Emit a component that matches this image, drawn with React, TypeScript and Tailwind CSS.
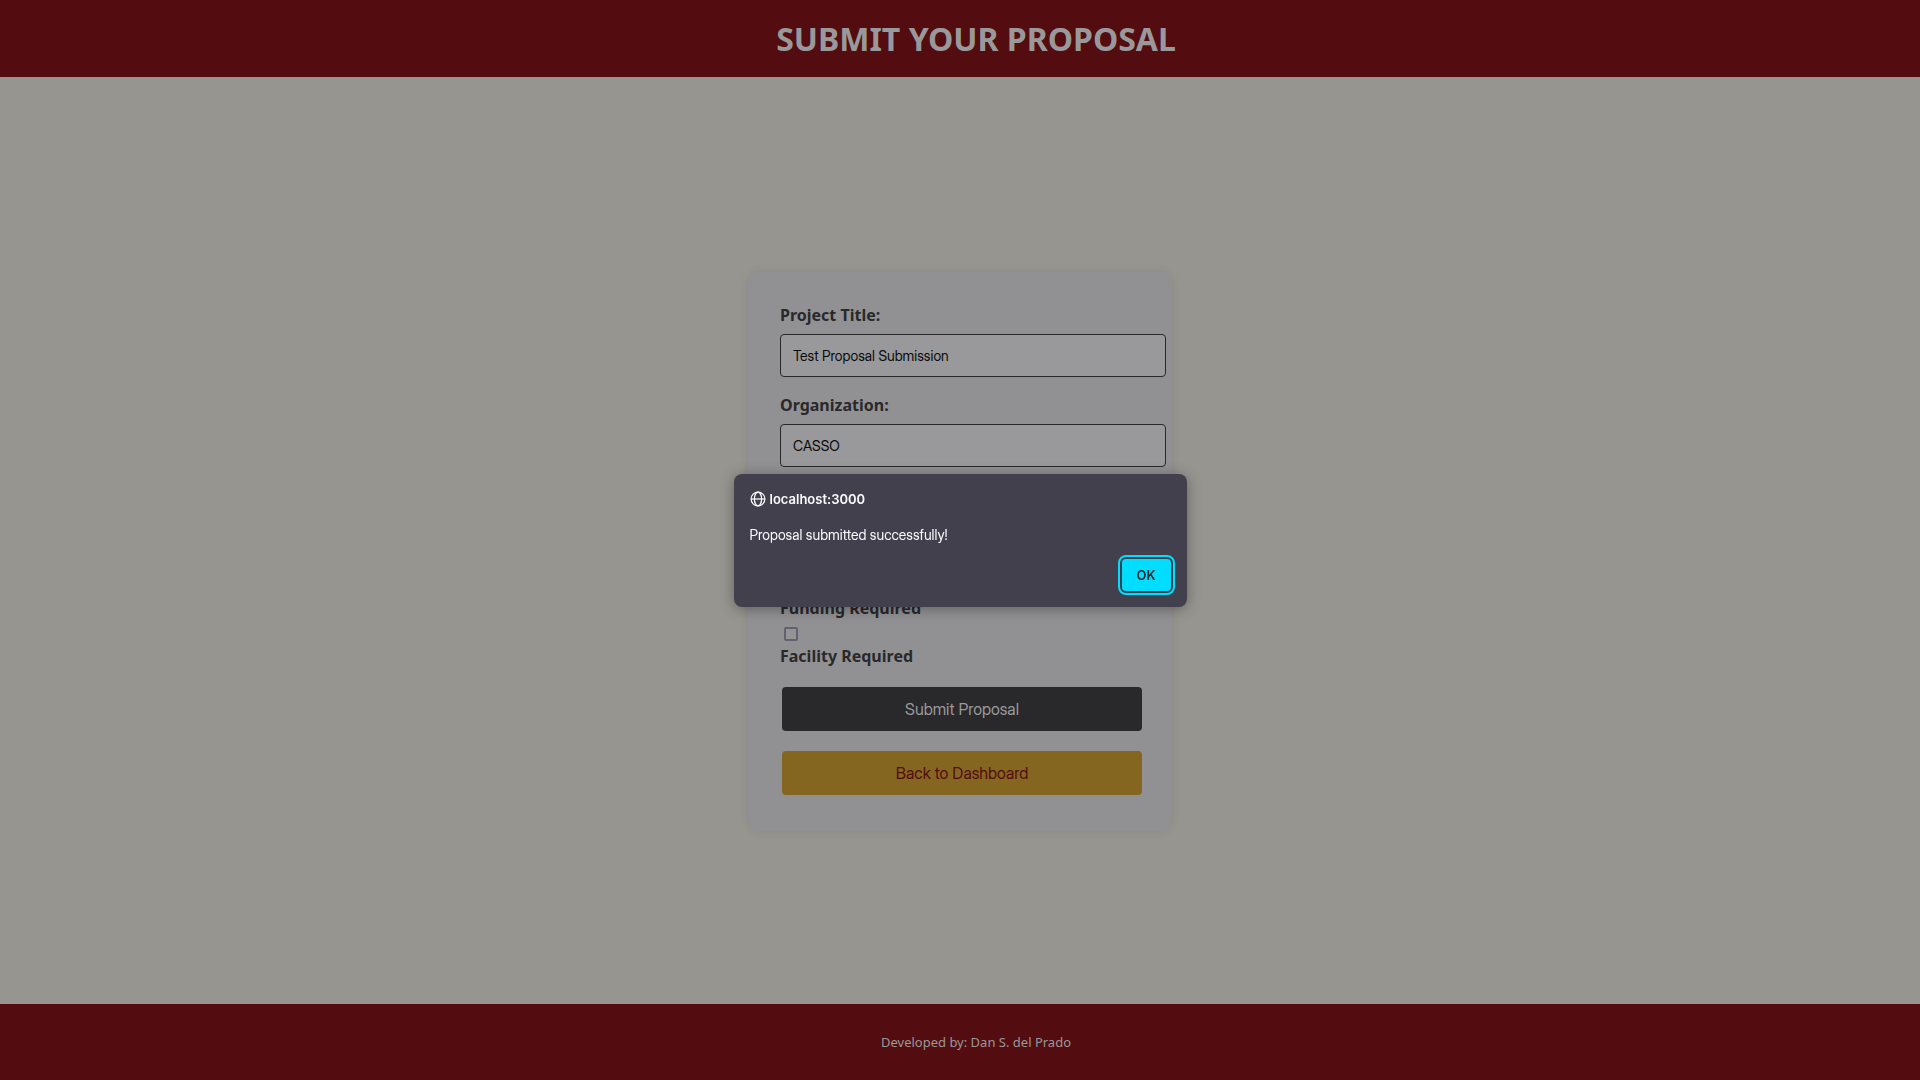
type FieldProps = { id: string; label: string; value: string };

function Field({ id, label, value }: FieldProps) {
  return (
    <div className="mb-[17px]">
      <label htmlFor={id} className="mb-2 block text-base leading-[22px] font-bold">
        {label}
      </label>
      <input
        id={id}
        type="text"
        defaultValue={value}
        className="block h-[43px] w-[386px] rounded border border-[#29292b] bg-[#99999b] px-3 font-['Inter_Display',Inter,sans-serif] text-sm text-[#0b0b0c]"
      />
    </div>
  );
}

function CheckField({ id, label }: { id: string; label: string }) {
  return (
    <div className="flex flex-col gap-1">
      <input
        id={id}
        type="checkbox"
        className="ml-1 size-[14px] appearance-none rounded-xs border-2 border-[#63616f] bg-[#949497]"
      />
      <label htmlFor={id} className="text-base leading-[22px] font-bold">
        {label}
      </label>
    </div>
  );
}

function GlobeIcon() {
  return (
    <svg aria-hidden="true" viewBox="0 0 16 16" className="size-4" fill="none" stroke="currentColor" strokeWidth="1.25">
      <circle cx="8" cy="8" r="6.9" />
      <ellipse cx="8" cy="8" rx="3.6" ry="6.9" />
      <path d="M1 8h14" />
    </svg>
  );
}

export default function App() {
  return (
    <div className="flex min-h-screen flex-col bg-[#979590] font-['Noto_Sans',sans-serif] text-[#29292b]">
      <header className="bg-[#530c10] py-4 pl-8 text-center">
        <h1 className="text-[32px] leading-[45px] font-bold text-[#99999b]">SUBMIT YOUR PROPOSAL</h1>
      </header>

      <main className="flex grow items-center justify-center pt-[22px]">
        <form className="w-[424px] rounded-[10px] bg-[#919193] px-8 pt-8 pb-9 shadow-[0_0_10px_rgba(0,0,0,0.08)]">
          <Field id="title" label="Project Title:" value="Test Proposal Submission" />
          <Field id="organization" label="Organization:" value="CASSO" />
          <div className="flex flex-col gap-2 pt-[95px]">
            <CheckField id="funding" label="Funding Required" />
            <CheckField id="facility" label="Facility Required" />
          </div>
          <div className="mt-5 flex flex-col gap-5 px-[2px] font-['Inter_Display',Inter,sans-serif] text-base">
            <button type="submit" className="h-11 w-[360px] rounded bg-[#29292b] text-[#99999b]">
              Submit Proposal
            </button>
            <button type="button" className="h-11 w-[360px] rounded bg-[#856620] text-[#530c10]">
              Back to Dashboard
            </button>
          </div>
        </form>
      </main>

      <footer className="bg-[#530c10] py-[29px] pl-8 text-center text-[13px] leading-[18px] text-[#99999b]">
        Developed by: Dan S. del Prado
      </footer>

      <div className="fixed inset-0 flex items-center justify-center">
        <div
          role="alertdialog"
          aria-labelledby="dialog-origin"
          aria-describedby="dialog-message"
          className="flex w-[453px] flex-col rounded-lg bg-[#42404d] px-4 pt-[17px] pb-4 font-[Inter,sans-serif] text-[13px] leading-4 text-[#fbfbfe] shadow-[0_2px_14px_rgba(0,0,0,0.35)]"
        >
          <h2 id="dialog-origin" className="flex items-center gap-1 font-semibold">
            <GlobeIcon />
            localhost:3000
          </h2>
          <p id="dialog-message" className="mt-5 font-['Inter_Display',Inter,sans-serif] text-sm leading-4">
            Proposal submitted successfully!
          </p>
          <button
            type="button"
            className="mt-4 h-8 w-[49px] self-end rounded bg-[#00ddff] font-semibold text-[#2b2a33] outline-2 outline-offset-2 outline-[#00ddff]"
          >
            OK
          </button>
        </div>
      </div>
    </div>
  );
}
